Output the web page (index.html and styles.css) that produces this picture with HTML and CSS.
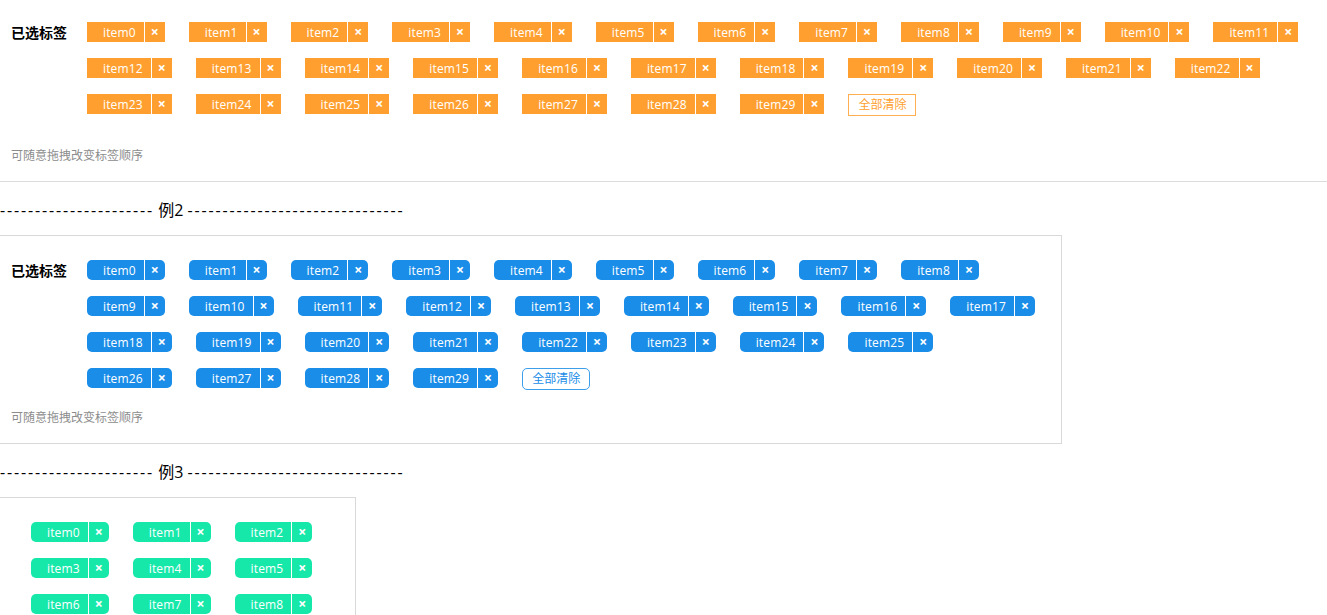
FILE: index.html
```html
<!DOCTYPE html>
<html lang="zh-CN">
<head>
<meta charset="utf-8">
<title>标签选择</title>
<link rel="stylesheet" href="styles.css">
</head>
<body>
<section class="demo demo-first theme-orange">
  <div class="picker">
    <div class="picker-label">已选标签</div>
    <ul class="tag-list">
      <li class="tag"><span class="tag-text">item0</span><span class="tag-close">×</span></li>
      <li class="tag"><span class="tag-text">item1</span><span class="tag-close">×</span></li>
      <li class="tag"><span class="tag-text">item2</span><span class="tag-close">×</span></li>
      <li class="tag"><span class="tag-text">item3</span><span class="tag-close">×</span></li>
      <li class="tag"><span class="tag-text">item4</span><span class="tag-close">×</span></li>
      <li class="tag"><span class="tag-text">item5</span><span class="tag-close">×</span></li>
      <li class="tag"><span class="tag-text">item6</span><span class="tag-close">×</span></li>
      <li class="tag"><span class="tag-text">item7</span><span class="tag-close">×</span></li>
      <li class="tag"><span class="tag-text">item8</span><span class="tag-close">×</span></li>
      <li class="tag"><span class="tag-text">item9</span><span class="tag-close">×</span></li>
      <li class="tag"><span class="tag-text">item10</span><span class="tag-close">×</span></li>
      <li class="tag"><span class="tag-text">item11</span><span class="tag-close">×</span></li>
      <li class="tag"><span class="tag-text">item12</span><span class="tag-close">×</span></li>
      <li class="tag"><span class="tag-text">item13</span><span class="tag-close">×</span></li>
      <li class="tag"><span class="tag-text">item14</span><span class="tag-close">×</span></li>
      <li class="tag"><span class="tag-text">item15</span><span class="tag-close">×</span></li>
      <li class="tag"><span class="tag-text">item16</span><span class="tag-close">×</span></li>
      <li class="tag"><span class="tag-text">item17</span><span class="tag-close">×</span></li>
      <li class="tag"><span class="tag-text">item18</span><span class="tag-close">×</span></li>
      <li class="tag"><span class="tag-text">item19</span><span class="tag-close">×</span></li>
      <li class="tag"><span class="tag-text">item20</span><span class="tag-close">×</span></li>
      <li class="tag"><span class="tag-text">item21</span><span class="tag-close">×</span></li>
      <li class="tag"><span class="tag-text">item22</span><span class="tag-close">×</span></li>
      <li class="tag"><span class="tag-text">item23</span><span class="tag-close">×</span></li>
      <li class="tag"><span class="tag-text">item24</span><span class="tag-close">×</span></li>
      <li class="tag"><span class="tag-text">item25</span><span class="tag-close">×</span></li>
      <li class="tag"><span class="tag-text">item26</span><span class="tag-close">×</span></li>
      <li class="tag"><span class="tag-text">item27</span><span class="tag-close">×</span></li>
      <li class="tag"><span class="tag-text">item28</span><span class="tag-close">×</span></li>
      <li class="tag"><span class="tag-text">item29</span><span class="tag-close">×</span></li>
      <li class="tag-action"><button class="clear-btn" type="button">全部清除</button></li>
    </ul>
  </div>
  <p class="hint hint-first">可随意拖拽改变标签顺序</p>
</section>

<div class="divider-title"><span class="dashes">----------------------</span> 例2 <span class="dashes">-------------------------------</span></div>

<section class="demo demo-box demo-second theme-blue rounded">
  <div class="picker">
    <div class="picker-label">已选标签</div>
    <ul class="tag-list">
      <li class="tag"><span class="tag-text">item0</span><span class="tag-close">×</span></li>
      <li class="tag"><span class="tag-text">item1</span><span class="tag-close">×</span></li>
      <li class="tag"><span class="tag-text">item2</span><span class="tag-close">×</span></li>
      <li class="tag"><span class="tag-text">item3</span><span class="tag-close">×</span></li>
      <li class="tag"><span class="tag-text">item4</span><span class="tag-close">×</span></li>
      <li class="tag"><span class="tag-text">item5</span><span class="tag-close">×</span></li>
      <li class="tag"><span class="tag-text">item6</span><span class="tag-close">×</span></li>
      <li class="tag"><span class="tag-text">item7</span><span class="tag-close">×</span></li>
      <li class="tag"><span class="tag-text">item8</span><span class="tag-close">×</span></li>
      <li class="tag"><span class="tag-text">item9</span><span class="tag-close">×</span></li>
      <li class="tag"><span class="tag-text">item10</span><span class="tag-close">×</span></li>
      <li class="tag"><span class="tag-text">item11</span><span class="tag-close">×</span></li>
      <li class="tag"><span class="tag-text">item12</span><span class="tag-close">×</span></li>
      <li class="tag"><span class="tag-text">item13</span><span class="tag-close">×</span></li>
      <li class="tag"><span class="tag-text">item14</span><span class="tag-close">×</span></li>
      <li class="tag"><span class="tag-text">item15</span><span class="tag-close">×</span></li>
      <li class="tag"><span class="tag-text">item16</span><span class="tag-close">×</span></li>
      <li class="tag"><span class="tag-text">item17</span><span class="tag-close">×</span></li>
      <li class="tag"><span class="tag-text">item18</span><span class="tag-close">×</span></li>
      <li class="tag"><span class="tag-text">item19</span><span class="tag-close">×</span></li>
      <li class="tag"><span class="tag-text">item20</span><span class="tag-close">×</span></li>
      <li class="tag"><span class="tag-text">item21</span><span class="tag-close">×</span></li>
      <li class="tag"><span class="tag-text">item22</span><span class="tag-close">×</span></li>
      <li class="tag"><span class="tag-text">item23</span><span class="tag-close">×</span></li>
      <li class="tag"><span class="tag-text">item24</span><span class="tag-close">×</span></li>
      <li class="tag"><span class="tag-text">item25</span><span class="tag-close">×</span></li>
      <li class="tag"><span class="tag-text">item26</span><span class="tag-close">×</span></li>
      <li class="tag"><span class="tag-text">item27</span><span class="tag-close">×</span></li>
      <li class="tag"><span class="tag-text">item28</span><span class="tag-close">×</span></li>
      <li class="tag"><span class="tag-text">item29</span><span class="tag-close">×</span></li>
      <li class="tag-action"><button class="clear-btn" type="button">全部清除</button></li>
    </ul>
  </div>
  <p class="hint hint-second">可随意拖拽改变标签顺序</p>
</section>

<div class="divider-title"><span class="dashes">----------------------</span> 例3 <span class="dashes">-------------------------------</span></div>

<section class="demo demo-box demo-third theme-green rounded">
  <ul class="tag-list">
    <li class="tag"><span class="tag-text">item0</span><span class="tag-close">×</span></li>
    <li class="tag"><span class="tag-text">item1</span><span class="tag-close">×</span></li>
    <li class="tag"><span class="tag-text">item2</span><span class="tag-close">×</span></li>
    <li class="tag"><span class="tag-text">item3</span><span class="tag-close">×</span></li>
    <li class="tag"><span class="tag-text">item4</span><span class="tag-close">×</span></li>
    <li class="tag"><span class="tag-text">item5</span><span class="tag-close">×</span></li>
    <li class="tag"><span class="tag-text">item6</span><span class="tag-close">×</span></li>
    <li class="tag"><span class="tag-text">item7</span><span class="tag-close">×</span></li>
    <li class="tag"><span class="tag-text">item8</span><span class="tag-close">×</span></li>
  </ul>
</section>
</body>
</html>
```

FILE: styles.css
```css
html, body {
  margin: 0;
  padding: 0;
  background: #fff;
}

body {
  font-family: "Microsoft YaHei", "Open Sans", "Noto Sans CJK SC", sans-serif;
  color: #000;
  font-size: 12px;
}

.demo {
  box-sizing: border-box;
}

.demo-first {
  padding: 14px 0 16px 11px;
  border-bottom: 1px solid #dcdcdc;
}

.demo-box {
  border: 1px solid #d9d9d9;
  border-left: none;
}

.demo-second {
  width: 1062px;
  padding: 16px 0 16px 11px;
}

.demo-third {
  width: 356px;
  padding: 16px 0 20px 31px;
}

.picker {
  display: flex;
  align-items: flex-start;
}

.picker-label {
  flex: 0 0 76px;
  margin-top: 9px;
  line-height: 20px;
  font-size: 14px;
  font-weight: bold;
  white-space: nowrap;
}

.tag-list {
  flex: 1 1 auto;
  min-width: 0;
  display: flex;
  flex-wrap: wrap;
  align-items: flex-start;
  list-style: none;
  margin: 0;
  padding: 0;
}

.tag {
  display: flex;
  height: 20px;
  margin: 8px 24px 8px 0;
  line-height: 21px;
  color: #fff;
  font-size: 12px;
  overflow: hidden;
  cursor: move;
}

.tag-text {
  padding: 0 8px 0 16px;
  letter-spacing: 0.15px;
  white-space: nowrap;
}

.tag-close {
  width: 20px;
  border-left: 1px solid #fff;
  text-align: center;
  font-size: 14px;
  font-weight: bold;
  line-height: 19px;
  cursor: pointer;
}

.tag-action {
  margin: 8px 0;
}

.clear-btn {
  display: block;
  box-sizing: border-box;
  height: 22px;
  padding: 0 9px;
  margin: 0;
  background: #fff;
  font-family: inherit;
  font-size: 12px;
  line-height: 20px;
  cursor: pointer;
}

.theme-orange .tag {
  background: #ff9f30;
}

.theme-orange .clear-btn {
  border: 1px solid #ffae52;
  color: #ff9f30;
}

.theme-blue .tag {
  background: #1a8de8;
}

.theme-blue .clear-btn {
  border: 1px solid #3d9ee9;
  color: #1a8de8;
}

.theme-green .tag {
  background: #16e8aa;
}

.rounded .tag,
.rounded .clear-btn {
  border-radius: 5px;
}

.hint {
  margin: 0;
  line-height: 18px;
  font-size: 12px;
  color: #8c8c8c;
}

.hint-first {
  margin-top: 23px;
}

.hint-second {
  margin-top: 11px;
}

.divider-title {
  margin: 17px 0 14px;
  height: 22px;
  line-height: 22px;
  font-size: 16px;
  white-space: nowrap;
}

.dashes {
  letter-spacing: 1.85px;
}
```
